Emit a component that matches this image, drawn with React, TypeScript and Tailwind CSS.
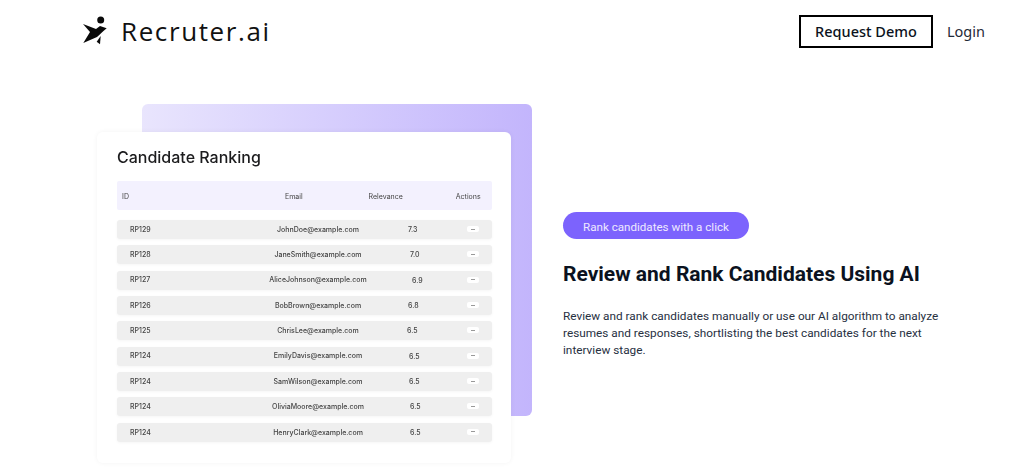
const rows = [
  { id: 'RP129', email: 'JohnDoe@example.com', score: '7.3', scoreClass: 'ml-[291px]' },
  { id: 'RP128', email: 'JaneSmith@example.com', score: '7.0', scoreClass: 'ml-[293px]' },
  { id: 'RP127', email: 'AliceJohnson@example.com', score: '6.9', scoreClass: 'ml-[295px]' },
  { id: 'RP126', email: 'BobBrown@example.com', score: '6.8', scoreClass: 'ml-[291px]' },
  { id: 'RP125', email: 'ChrisLee@example.com', score: '6.5', scoreClass: 'ml-[290px]' },
  { id: 'RP124', email: 'EmilyDavis@example.com', score: '6.5', scoreClass: 'ml-[292px]' },
  { id: 'RP124', email: 'SamWilson@example.com', score: '6.5', scoreClass: 'ml-[292px]' },
  { id: 'RP124', email: 'OliviaMoore@example.com', score: '6.5', scoreClass: 'ml-[293px]' },
  { id: 'RP124', email: 'HenryClark@example.com', score: '6.5', scoreClass: 'ml-[293px]' },
];

const Logo = () => (
  <svg viewBox="0 0 26 30" className="w-[26px] h-[30px]" fill="#0a0a0a">
    <circle cx="18.7" cy="4" r="3.5" />
    <path d="M1 8 L14 13 L18 10 L24.7 12.3 C21 15.5 18 18.5 15 21 L1.3 27 L8 16 Z" />
    <path d="M18.7 20 L18 28.3 L14.7 25.7 Z" />
  </svg>
);

export default function App() {
  return (
    <div className="w-[1024px] h-[472px] overflow-hidden bg-white font-['Roboto','Noto_Sans',sans-serif]">
      {/* Header */}
      <header className="h-[63px] pl-[82px] pr-[40px] flex items-start">
        <div className="flex items-center gap-[13px] pt-[16px]">
          <Logo />
          <span className="text-[26px] leading-[30px] tracking-[1.6px] text-[#111] font-medium font-['Open_Sans',sans-serif]">Recruter.ai</span>
        </div>
        <div className="ml-auto flex items-center gap-[14px] pt-[15px] font-['Noto_Sans',sans-serif]">
          <div className="w-[134px] h-[33px] border-2 border-black flex items-center justify-center text-[14.5px] font-medium text-[#0b1220]">
            Request Demo
          </div>
          <span className="w-[37px] text-[14.5px] text-[#1f2937]">Login</span>
        </div>
      </header>

      <main className="flex">
        {/* Mockup */}
        <div className="relative ml-[97px] mt-[69px] w-[414px] h-[331px]">
          <div className="absolute left-[45px] top-[-28px] w-[390px] h-[312px] rounded-[6px] bg-gradient-to-r from-[#e9e5fd] to-[#c3b5fc]" />
          <div className="absolute inset-0 rounded-[6px] bg-white shadow-[0_0_5px_rgba(0,0,0,0.05)] pl-[20px] pr-[19px] pt-[14px] font-['Inter',sans-serif] blur-[0.3px]">
            <h3 className="text-[16px] leading-[22px] font-medium text-[#1c1c1e]">Candidate Ranking</h3>
            <div className="mt-[13px] h-[29px] pt-[3px] rounded-[2px] bg-[#f3f1fe] flex items-center text-[7px] text-[#444]">
              <span className="ml-[5px]">ID</span>
              <span className="ml-[156px]">Email</span>
              <span className="ml-[66px]">Relevance</span>
              <span className="ml-[53px]">Actions</span>
            </div>
            <div className="mt-[10px] flex flex-col gap-[6.35px]">
              {rows.map((row) => (
                <div key={row.email} className="relative h-[19px] pt-px rounded-[3px] bg-[#efefef] shadow-[0_1px_3px_rgba(0,0,0,0.04)] flex items-center text-[7px] font-medium text-[#444]">
                  <span className={`${row.scoreClass} absolute left-0 top-[5px] leading-[9px]`}>{row.score}</span>
                  <span className="ml-[13px]">{row.id}</span>
                  <span className="absolute left-[100px] w-[202px] text-center">{row.email}</span>
                  <span className="absolute right-[13px] top-[6px] w-[12px] h-[6px] rounded-[2px] bg-white flex items-center justify-center">
                    <span className="w-[4px] h-px bg-[#999]" />
                  </span>
                </div>
              ))}
            </div>
          </div>
        </div>

        {/* Copy */}
        <div className="ml-[52px] mt-[149px] w-[385px]">
          <div className="w-[186px] h-[27px] pt-[5px] rounded-full bg-[#7c63fd] flex items-center justify-center text-[11.6px] text-[#eee9ff]">
            Rank candidates with a click
          </div>
          <h2 className="mt-[21px] text-[21px] leading-[28px] font-bold text-[#0b1220] whitespace-nowrap">
            Review and Rank Candidates Using AI
          </h2>
          <p className="mt-[20px] text-[11.8px] leading-[17px] text-[#27303f]">
            Review and rank candidates manually or use our AI algorithm to analyze resumes and responses, shortlisting the best candidates for the next interview stage.
          </p>
        </div>
      </main>
    </div>
  );
}
